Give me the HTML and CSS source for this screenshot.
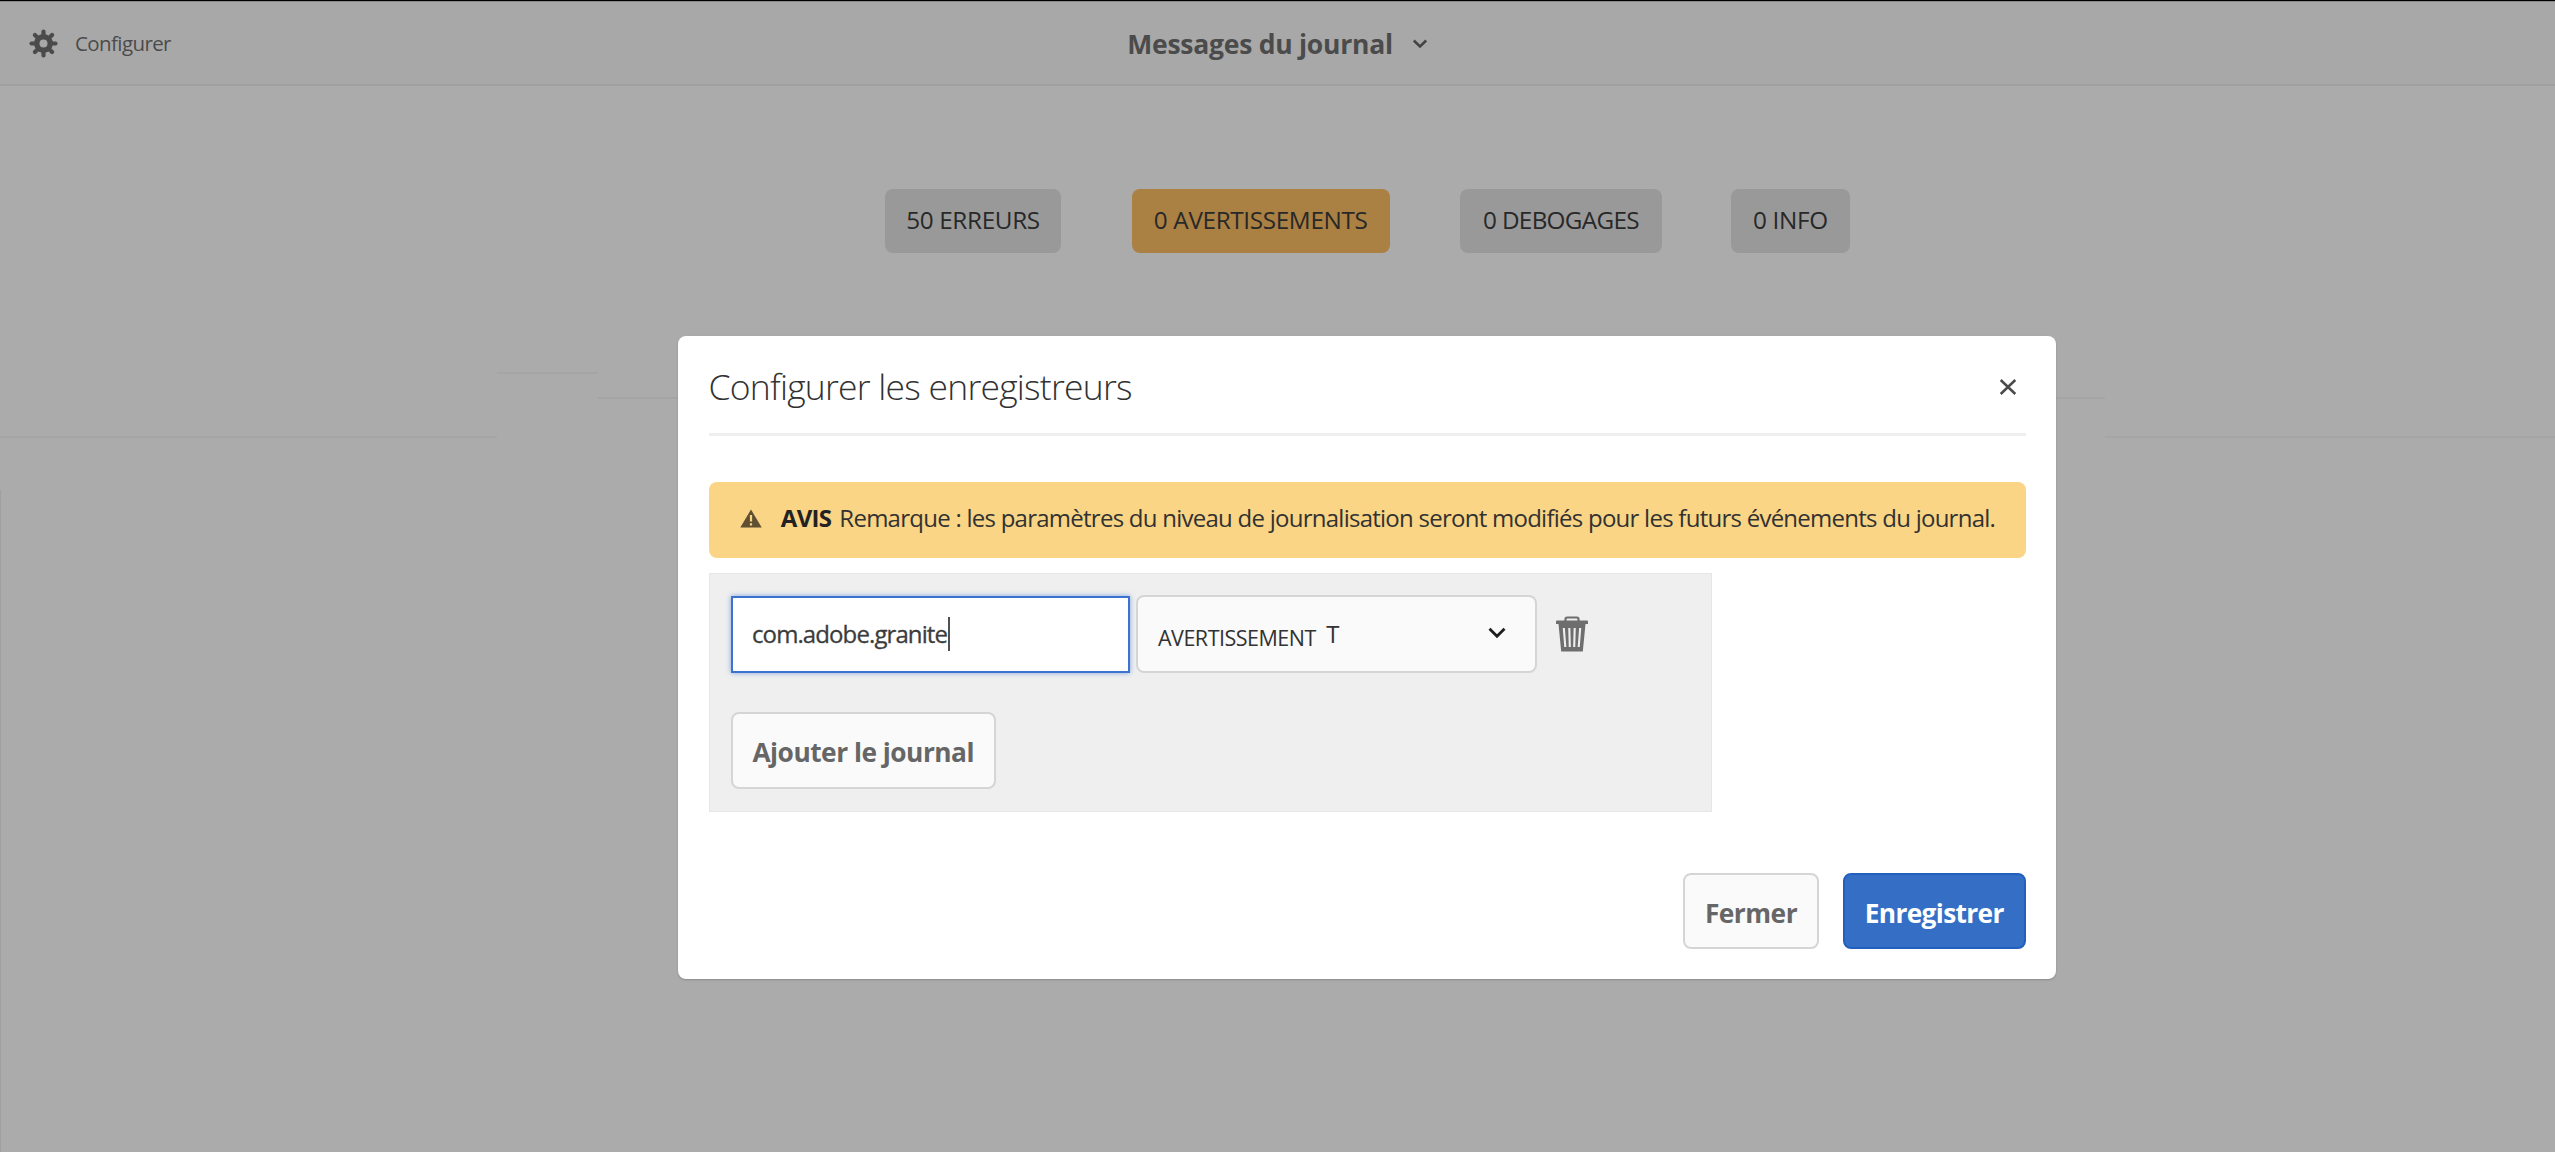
FILE: index.html
```
<!DOCTYPE html>
<html lang="fr">
<head>
<meta charset="utf-8">
<title>Messages du journal</title>
<link rel="stylesheet" href="styles.css">
</head>
<body>
<header class="topbar">
  <div class="topbar-left">
    <svg class="gear" width="29" height="29" viewBox="-14.5 -14.5 29 29">
      <g fill="none" stroke="#4b4b4b">
        <circle r="6.7" stroke-width="5.4"/>
        <g stroke-width="4.2" stroke-linecap="round">
          <path d="M0-8V-12M0 8V12M-8 0H-12M8 0H12M-6.5-6.5-8.6-8.6M6.5-6.5 8.6-8.6M-6.5 6.5-8.6 8.6M6.5 6.5 8.6 8.6"/>
        </g>
      </g>
    </svg>
    <span class="configure">Configurer</span>
  </div>
  <div class="topbar-title">
    <span>Messages du journal</span>
    <svg width="16" height="10" viewBox="0 0 16 10"><path d="M1.800 1.500 8 7.500 14.200 1.500" fill="none" stroke="#444" stroke-width="2.500"/></svg>
  </div>
  <div class="topbar-right"></div>
</header>
<main class="page">
  <div class="badges">
    <span class="badge errors">50 ERREURS</span>
    <span class="badge warnings">0 AVERTISSEMENTS</span>
    <span class="badge debug">0 DEBOGAGES</span>
    <span class="badge info">0 INFO</span>
  </div>
  <div class="columns">
    <div class="col col-time"></div>
    <div class="col col-level"></div>
    <div class="col col-message"></div>
    <div class="col col-end"></div>
  </div>
  <div class="list"></div>
</main>
<section class="dialog" role="dialog">
  <div class="dialog-header">
    <h2>Configurer les enregistreurs</h2>
    <svg width="18" height="16" viewBox="0 0 18 16"><path d="M1.700 1 16.300 15M16.300 1 1.700 15" stroke="#4b4b4b" stroke-width="2.500"/></svg>
  </div>
  <div class="alert">
    <svg width="22" height="19" viewBox="0 0 22 19"><path d="M11 .5 21.700 18.500H.3Z" fill="#5f5033"/><path d="M11 6V12.600M11 14.300V16.600" stroke="#f9d585" stroke-width="2.200"/></svg>
    <strong>AVIS</strong>
    <span>Remarque : les paramètres du niveau de journalisation seront modifiés pour les futurs événements du journal.</span>
  </div>
  <div class="panel">
    <div class="logger">
      <div class="field"><span>com.adobe.granite</span><i class="caret"></i></div>
      <div class="select">
        <span class="level">AVERTISSEMENT</span>
        <span class="suffix">T</span>
        <svg width="18" height="12" viewBox="0 0 18 12"><path d="M1.500 1.800 9 9.200 16.500 1.800" fill="none" stroke="#1e1e1e" stroke-width="2.800"/></svg>
      </div>
      <svg class="trash" width="32" height="36" viewBox="0 0 32 36">
        <path d="M9.500 5V3.200Q9.500 1.500 11.200 1.500H20.800Q22.500 1.500 22.500 3.200V5" fill="none" stroke="#6e6e6e" stroke-width="2.200"/>
        <path d="M1 4.500H31Q32 4.500 32 5.500V8H0V5.500Q0 4.500 1 4.500ZM2.500 8H29.500L26.800 35.500H5.200Z" fill="#6e6e6e"/>
        <path d="M7.800 12 9.300 31M13.300 12 13.800 31M18.700 12 18.200 31M24.200 12 22.700 31" stroke="#efefef" stroke-width="2.100"/>
      </svg>
    </div>
    <button class="btn add">Ajouter le journal</button>
  </div>
  <div class="actions">
    <button class="btn close">Fermer</button>
    <button class="btn primary">Enregistrer</button>
  </div>
</section>
</body>
</html>
```
FILE: styles.css
```
* { box-sizing: border-box; }
html, body { height: 100%; }
body {
  margin: 0;
  display: flex;
  flex-direction: column;
  overflow: hidden;
  background: #ababab;
  font-family: "Open Sans", "Noto Sans", sans-serif;
  white-space: nowrap;
}
svg { display: block; flex: none; }

.topbar {
  flex: none;
  height: 86px;
  display: flex;
  align-items: center;
  border-top: 1px solid #000;
  border-bottom: 2px solid #9f9f9f;
  box-shadow: inset 0 1px #8a8a8a;
  background: #a8a8a8;
  color: #4b4b4b;
}
.topbar-left, .topbar-right { flex: 1; display: flex; align-items: center; }
.topbar-left { padding: 2px 0 0 29px; gap: 17px; }
.topbar-right { padding-right: 29px; }
.configure { padding-bottom: 1px; font-size: 20.5px; letter-spacing: -.6px; }
.topbar-title {
  display: flex;
  align-items: center;
  gap: 19px;
  padding: 3px 0 0;
  font-size: 26.5px;
  font-weight: 700;
  letter-spacing: -.25px;
}

.page { flex: 1; display: flex; flex-direction: column; }
.badges { display: flex; gap: 70.4px; padding: 103px 0 0 884.6px; }
.badge {
  height: 64px;
  border-radius: 8px;
  background: #999;
  color: #282828;
  font-size: 24.3px;
  letter-spacing: -.35px;
  line-height: 61px;
  text-align: center;
}
.errors { width: 176.8px; }
.warnings { width: 257.8px; background: #aa8043; }
.debug { width: 202px; letter-spacing: -.7px; }
.info { width: 118.5px; margin-left: -1.2px; }

.columns { display: flex; align-items: flex-start; height: 237px; }
.col { border-bottom: 2px solid #a5a5a5; }
.col-time { width: 497px; height: 185px; }
.col-level { width: 101px; height: 121px; }
.col-message { width: 1507px; height: 146px; }
.col-end { flex: 1; height: 185px; }
.list { flex: 1; border-left: 1px solid #a0a0a0; }

/* The dialog floats above the page */
.dialog {
  position: absolute;
  left: 678px;
  top: 336px;
  width: 1378px;
  height: 643px;
  display: flex;
  flex-direction: column;
  padding: 0 30.5px;
  border-radius: 8px;
  background: #fff;
  box-shadow: 0 1px 2px rgba(0, 0, 0, .2);
}
.dialog-header {
  flex: none;
  height: 100px;
  display: flex;
  align-items: center;
  justify-content: space-between;
  padding: 3px 9px 0 0;
  border-bottom: 3px solid #efefef;
}
.dialog-header svg { margin-top: 2px; }
.dialog-header h2 {
  margin: 0;
  color: #323232;
  font-size: 35.5px;
  font-weight: 300;
  letter-spacing: -.77px;
}
.alert {
  flex: none;
  height: 76px;
  display: flex;
  align-items: center;
  margin-top: 46px;
  padding: 0 0 6px 31px;
  border-radius: 8px;
  background: #f9d585;
  color: #323232;
  font-size: 24px;
  letter-spacing: -.745px;
}
.alert svg { margin: 3px 19.3px 0 0; }
.alert strong { margin-right: 8px; color: #222; letter-spacing: -.7px; }
.panel {
  flex: none;
  width: 1003px;
  height: 239px;
  margin-top: 15px;
  padding: 21px 21.5px;
  border: 1px solid #e6e6e6;
  background: #efefef;
}
.logger { display: flex; align-items: center; height: 78px; margin-bottom: 39px; }
.field {
  width: 399px;
  height: 77px;
  display: flex;
  align-items: center;
  padding-left: 19px;
  border: 2px solid #3b73ce;
  background: #fff;
  box-shadow: 0 0 5px rgba(59, 115, 206, .6);
  color: #3c3c3c;
  font-size: 24px;
  letter-spacing: -.9px;
  -webkit-text-stroke: .3px #3c3c3c;
}
.field span { padding-bottom: 1px; }
.caret { width: 2px; height: 34px; margin-left: 1px; background: #505050; }
.select {
  width: 401px;
  height: 78px;
  display: flex;
  align-items: center;
  margin-left: 6px;
  padding: 0 29px 0 20px;
  border: 2px solid #d5d5d5;
  border-radius: 8px;
  background: #fafafa;
  color: #323232;
}
.level { padding-top: 7px; font-size: 21.5px; letter-spacing: -.5px; }
.suffix { margin-left: 10.5px; padding-bottom: 1px; font-size: 24px; }
.select svg { margin: -2px 0 0 auto; }
.trash { margin-left: 19px; }
.btn {
  height: 76px;
  border: 2px solid #d5d5d5;
  border-radius: 8px;
  padding: 3px 0 0;
  background: #fafafa;
  color: #666;
  font: 700 26.3px "Open Sans", "Noto Sans", sans-serif;
  letter-spacing: -.5px;
}
.add { width: 264.5px; height: 77px; display: block; }
.actions { display: flex; justify-content: flex-end; gap: 24px; margin-top: 61px; }
.close { width: 136px; }
.primary {
  width: 182.5px;
  border-color: #2160bd;
  background: #356fc5;
  color: #fff;
  letter-spacing: -.65px;
}
```
